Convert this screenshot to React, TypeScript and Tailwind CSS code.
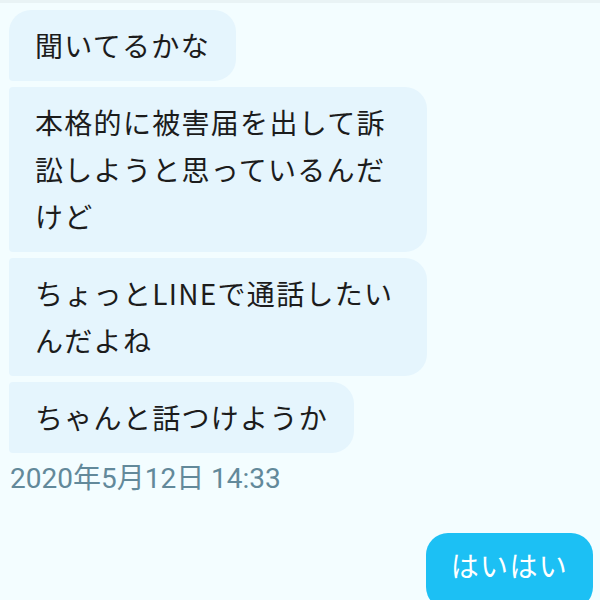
const jp = "font-['Noto_Sans_CJK_JP',sans-serif]";

type BubbleProps = {
  lines: string;
  corner: string;
};

const Bubble = ({ lines, corner }: BubbleProps) => (
  <div
    className={`self-start max-w-[418px] bg-[#e5f5fd] text-[#1c1c1c] px-[26px] py-[12px] text-[28px] leading-[47px] tracking-[1.3px] ${corner}`}
  >
    {lines}
  </div>
);

const App = () => {
  return (
    <div className={`w-[600px] h-[600px] overflow-hidden bg-[#f3fdff] ${jp}`}>
      <div className="h-[3px] bg-[#e9f3f5]" />
      <div className="flex flex-col gap-[6px] px-[9px] pt-[7px]">
        <Bubble lines="聞いてるかな" corner="rounded-tl-[22px] rounded-r-[22px] rounded-bl-[4px]" />
        <Bubble lines="本格的に被害届を出して訴訟しようと思っているんだけど" corner="rounded-l-[4px] rounded-r-[22px]" />
        <Bubble lines="ちょっとLINEで通話したいんだよね" corner="rounded-l-[4px] rounded-r-[22px]" />
        <Bubble lines="ちゃんと話つけようか" corner="rounded-l-[4px] rounded-r-[22px]" />
        <div className="pl-[1px] pt-[3px] font-['Roboto','Noto_Sans_CJK_JP',sans-serif] text-[28px] leading-[34px] text-[#62899a]">
          2020年5月12日 14:33
        </div>
        <div className="self-end mt-[31px] mr-[-2px] bg-[#1cc0f4] text-white px-[25px] pt-[9px] pb-[20px] text-[28px] leading-[47px] tracking-[1.3px] rounded-[22px]">
          はいはい
        </div>
      </div>
    </div>
  );
};

export default App;
